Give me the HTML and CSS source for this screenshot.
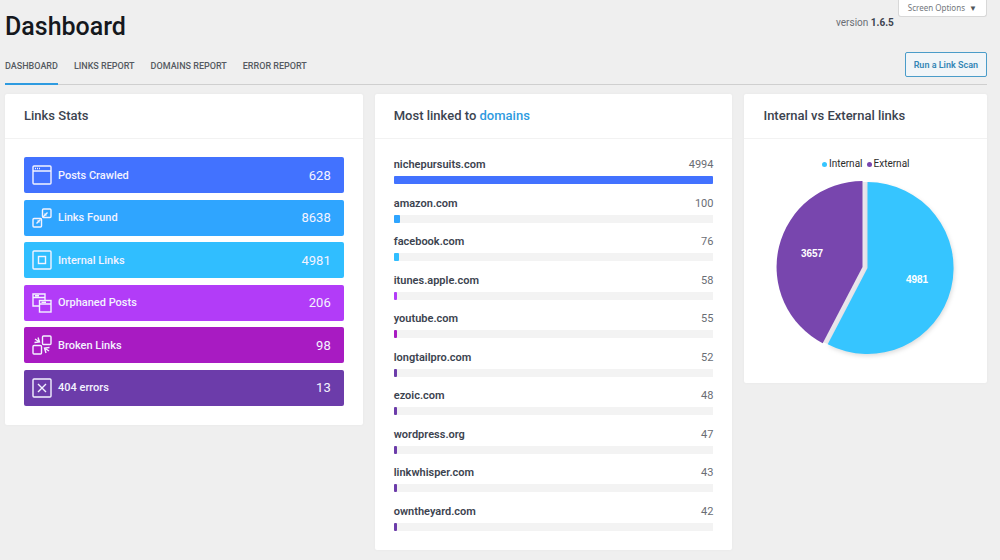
FILE: index.html
```html
<!DOCTYPE html>
<html lang="en">
<head>
<meta charset="utf-8">
<title>Dashboard</title>
<link rel="stylesheet" href="styles.css">
</head>
<body>
<div class="page">
  <header class="top">
    <h1 class="title">Dashboard</h1>
    <p class="version">version <strong>1.6.5</strong></p>
    <button class="screen-options" type="button">Screen Options <span class="caret">▼</span></button>
  </header>
  <div class="nav-row">
    <nav class="tabs">
      <a class="tab tab-active" href="#">DASHBOARD</a>
      <a class="tab" href="#">LINKS REPORT</a>
      <a class="tab" href="#">DOMAINS REPORT</a>
      <a class="tab" href="#">ERROR REPORT</a>
    </nav>
    <button class="scan" type="button">Run a Link Scan</button>
  </div>
  <main class="cards">
    <section class="card">
      <h2 class="card-title">Links Stats</h2>
      <ul class="stats">
        <li class="stat blue">
          <svg class="icon" viewBox="0 0 20 20"><rect x="1" y="1" width="18" height="18" rx="1"/><path d="M1 6H19M3 3.500H4M5 3.500H6M7 3.500H8"/></svg>
          <span>Posts Crawled</span><span class="num">628</span></li>
        <li class="stat sky">
          <svg class="icon" viewBox="0 0 20 20"><rect x="1" y="10.500" width="8.500" height="8.500" rx="1"/><rect x="10.500" y="1" width="8.500" height="8.500" rx="1"/><path d="M4.500 15.500L8.500 11.500M11 9L15.500 4.500M5.500 13H7V14.500M14.500 7H13V5.500"/></svg>
          <span>Links Found</span><span class="num">8638</span></li>
        <li class="stat cyan">
          <svg class="icon" viewBox="0 0 20 20"><rect x="1" y="1" width="18" height="18" rx="1"/><rect x="6.500" y="6.500" width="7" height="7"/></svg>
          <span>Internal Links</span><span class="num">4981</span></li>
        <li class="stat violet">
          <svg class="icon" viewBox="0 0 20 20"><path d="M7 13H1V1H13V7M1 4.500H13M3 2.700H7"/><rect x="7.500" y="7.500" width="11.500" height="11.500"/><path d="M7.500 11H19M9.500 9.200H14"/></svg>
          <span>Orphaned Posts</span><span class="num">206</span></li>
        <li class="stat magenta">
          <svg class="icon" viewBox="0 0 20 20"><rect x="1" y="10.500" width="8.500" height="8.500" rx="1"/><rect x="10.500" y="1" width="8.500" height="8.500" rx="1"/><path d="M3 4L7.500 7M6 2.500L7.500 7L2.500 7.500M17 16L12.500 13M14 18L12.500 13L17.500 12.500"/></svg>
          <span>Broken Links</span><span class="num">98</span></li>
        <li class="stat purple">
          <svg class="icon" viewBox="0 0 20 20"><rect x="1" y="1" width="18" height="18" rx="1"/><path d="M6 6L14 14M14 6L6 14"/></svg>
          <span>404 errors</span><span class="num">13</span></li>
      </ul>
    </section>
    <section class="card">
      <h2 class="card-title">Most linked to <a class="link" href="#">domains</a></h2>
      <ul class="domains">
        <li class="domain"><span class="name">nichepursuits.com</span><span class="count">4994</span><div class="track"><div class="fill blue" style="width:100%"></div></div></li>
        <li class="domain"><span class="name">amazon.com</span><span class="count">100</span><div class="track"><div class="fill sky" style="width:2%"></div></div></li>
        <li class="domain"><span class="name">facebook.com</span><span class="count">76</span><div class="track"><div class="fill cyan" style="width:1.5%"></div></div></li>
        <li class="domain"><span class="name">itunes.apple.com</span><span class="count">58</span><div class="track"><div class="fill violet" style="width:1.1%"></div></div></li>
        <li class="domain"><span class="name">youtube.com</span><span class="count">55</span><div class="track"><div class="fill magenta" style="width:1.1%"></div></div></li>
        <li class="domain"><span class="name">longtailpro.com</span><span class="count">52</span><div class="track"><div class="fill purple" style="width:1%"></div></div></li>
        <li class="domain"><span class="name">ezoic.com</span><span class="count">48</span><div class="track"><div class="fill purple" style="width:1%"></div></div></li>
        <li class="domain"><span class="name">wordpress.org</span><span class="count">47</span><div class="track"><div class="fill purple" style="width:0.9%"></div></div></li>
        <li class="domain"><span class="name">linkwhisper.com</span><span class="count">43</span><div class="track"><div class="fill purple" style="width:0.9%"></div></div></li>
        <li class="domain"><span class="name">owntheyard.com</span><span class="count">42</span><div class="track"><div class="fill purple" style="width:0.8%"></div></div></li>
      </ul>
    </section>
    <section class="card">
      <h2 class="card-title">Internal vs External links</h2>
      <div class="chart">
        <div class="legend"><span class="dot dot-in"></span>Internal<span class="dot dot-ex"></span>External</div>
        <svg class="pie" viewBox="0 0 182 182" role="img" aria-label="Internal 4981, External 3657">
          <path class="seam" d="M87 4H93V90L53 166L47 164L87 89Z"/>
          <path class="slice-in" d="M92.500 90V4A86 86 0 1 1 52.700 166.200Z"/>
          <path class="slice-ex" d="M87.500 89L47.700 165.200A86 86 0 0 1 87.500 3Z"/>
          <text class="pie-label" x="37" y="79">3657</text>
          <text class="pie-label" x="142" y="105">4981</text>
        </svg>
      </div>
    </section>
  </main>
</div>
</body>
</html>
```
FILE: styles.css
```css
* { box-sizing: border-box; }
body {
  margin: 0;
  background: #efefef;
  color: #3c434f;
  font-family: Roboto, "Liberation Sans", sans-serif;
}
h1, h2, p, ul { margin: 0; padding: 0; }
ul { list-style: none; }
a { color: inherit; text-decoration: none; }
button { font-family: inherit; cursor: pointer; }

.page { padding: 0 13px 9px 5px; }

.top { display: flex; align-items: flex-start; }
.title {
  flex: 1;
  padding-top: 11px;
  font-size: 25px;
  line-height: 32px;
  font-weight: 500;
  color: #15181d;
}
.version { padding: 15px 4px 0 0; font-size: 10px; line-height: 16px; color: #6a6d74; }
.version strong { color: #3c434f; }
.screen-options {
  height: 17px;
  padding: 0 9px;
  border: 1px solid #d8d8d8;
  border-top: 0;
  border-radius: 0 0 3px 3px;
  background: #fff;
  color: #72777c;
  font-family: "Noto Sans", sans-serif;
  font-size: 8px;
  line-height: 14px;
  white-space: nowrap;
}
.caret { margin-left: 2px; font-size: 8px; color: #50555a; }

.nav-row {
  display: flex;
  align-items: flex-start;
  justify-content: space-between;
  margin-top: 9px;
  border-bottom: 1px solid #cfcfcf;
}
.tabs { display: flex; gap: 16px; margin-bottom: -1px; }
.tab {
  padding: 8px 0 10px;
  border-bottom: 2px solid transparent;
  font-size: 9px;
  line-height: 13px;
  font-weight: 500;
  color: #555a61;
}
.tab-active { border-color: #2e9be0; }
.scan {
  height: 25px;
  padding: 0 8px;
  border: 1px solid #4a9cc9;
  border-radius: 2px;
  background: #f1f5f8;
  color: #3486b5;
  font-size: 9px;
  font-weight: 600;
}

.cards {
  display: grid;
  grid-template-columns: 59fr 59fr 40fr;
  gap: 12px;
  align-items: start;
  margin-top: 9px;
}
.card { background: #fff; border-radius: 2px; box-shadow: 0 0 2px #e4e4e4; }
.card-title {
  padding: 12px 19px;
  border-bottom: 1px solid #f2f2f2;
  font-size: 13px;
  line-height: 20px;
  font-weight: 500;
  color: #3c434f;
}
.link { color: #2e9be0; }

.stats {
  display: flex;
  flex-direction: column;
  justify-content: space-between;
  min-height: 286px;
  padding: 18px 19px 19px;
}
.stat {
  display: flex;
  align-items: center;
  gap: 6px;
  height: 36px;
  padding: 0 13px 0 8px;
  border-radius: 2px;
  color: #f3f3ff;
  font-size: 11px;
  font-weight: 500;
}
.icon { width: 20px; height: 20px; fill: none; stroke: #f3f3ff; stroke-width: 1.400; }
.num { margin-left: auto; font-size: 13px; font-weight: 400; }

.blue { background: #4272ff; }
.sky { background: #2fa5ff; }
.cyan { background: #30beff; }
.violet { background: #b23cf8; }
.magenta { background: #a81bc2; }
.purple { background: #6c3caa; }

.domains {
  display: flex;
  flex-direction: column;
  justify-content: space-between;
  min-height: 411px;
  padding: 18px 19px 19px;
}
.domain {
  display: grid;
  grid-template-columns: 1fr auto;
  row-gap: 3px;
  font-size: 11px;
  line-height: 16px;
}
.name { font-weight: 600; }
.count { color: #6a6d74; }
.track { grid-column: 1 / -1; height: 8px; background: #f3f3f3; }
.fill { height: 8px; min-width: 3px; border-radius: 1px; }

.chart { padding: 17px 19px 23px; text-align: center; }
.legend {
  display: flex;
  align-items: center;
  justify-content: center;
  gap: 2px;
  font-size: 10px;
  line-height: 16px;
  color: #2b2b2b;
}
.dot { width: 5px; height: 5px; border-radius: 50%; }
.dot-in { background: #36c5ff; }
.dot-ex { margin-left: 2px; background: #7846ae; }
.pie { display: block; width: 182px; max-width: 100%; margin: 6px auto 0; overflow: visible; }
.seam { fill: #e9e6ec; }
.slice-in { fill: #36c5ff; filter: drop-shadow(1px 2px 2px #0002); }
.slice-ex { fill: #7846ae; }
.pie-label {
  fill: #fff;
  font: bold 10px "Liberation Sans", sans-serif;
  text-anchor: middle;
}
```
